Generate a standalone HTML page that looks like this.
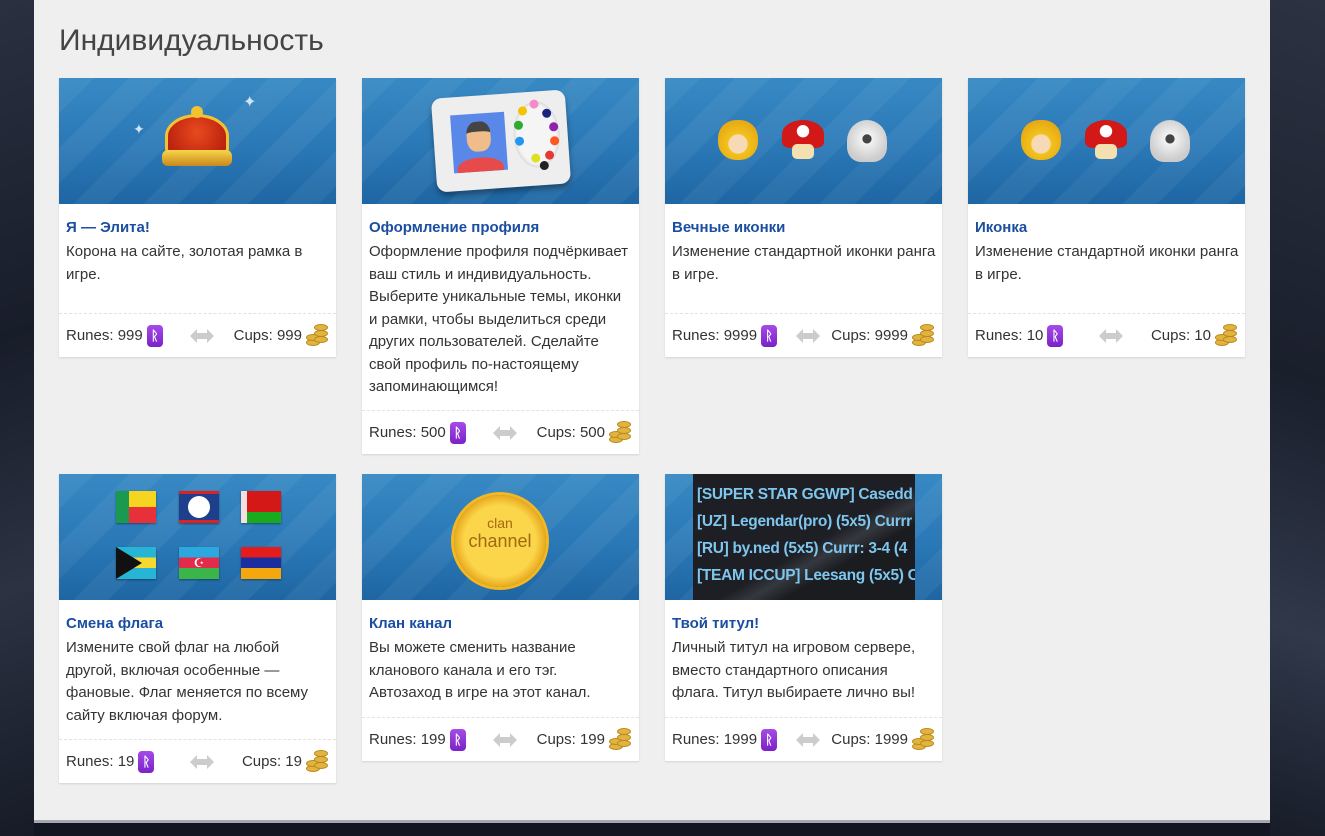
<!DOCTYPE html>
<html><head><meta charset="utf-8">
<style>
*{box-sizing:border-box;margin:0;padding:0}
body{width:1325px;height:836px;overflow:hidden;background:#1b2130;font-family:"Liberation Sans",Arial,sans-serif;position:relative}
.bgl{position:absolute;left:0;top:0;width:34px;height:836px;background:linear-gradient(160deg,#2a3040,#181d2a 40%,#2c3242 70%,#161b27)}
.bgr{position:absolute;right:0;top:0;width:55px;height:836px;background:linear-gradient(200deg,#2c3242,#1a1f2c 45%,#30384a 75%,#171c28)}
.main{position:absolute;left:34px;top:0;width:1236px;height:820px;background:#efefef}
.bottom{position:absolute;left:34px;top:820px;width:1236px;height:16px;background:#121620;border-top:3px solid #a5a9ae}
h1{position:absolute;left:59px;top:24px;font-size:30px;font-weight:normal;color:#444}
.card{position:absolute;width:277px;background:#fff;box-shadow:0 1px 2px rgba(0,0,0,.12)}
.img{height:126px;position:relative;overflow:hidden;background:linear-gradient(180deg,#3789c4 0%,#2a78b6 55%,#1e66a3 100%)}
.img:before{content:"";position:absolute;inset:0;background:linear-gradient(135deg,rgba(255,255,255,.05) 25%,transparent 25%,transparent 50%,rgba(255,255,255,.05) 50%,rgba(255,255,255,.05) 75%,transparent 75%);background-size:70px 70px}
.t{font-size:15px;font-weight:bold;color:#1b4ea1;padding:16px 7px 0;line-height:16px}
.d{font-size:15px;color:#333;line-height:22.5px;padding:5px 0 0 7px;white-space:nowrap}
.f{position:absolute;left:0;right:0;bottom:0;height:44px;border-top:1px dashed #e2e2e2;display:flex;align-items:center;justify-content:space-between;padding:0 6px 0 7px;font-size:15px;color:#333}
.f span{display:flex;align-items:center}
.rune{display:inline-block;width:16px;height:22px;border-radius:4px;background:linear-gradient(#a44be8,#7a22c8);margin-left:4px;color:#fff;font-size:13px;font-weight:bold;text-align:center;line-height:22px;font-style:normal}
.arr{width:24px;height:14px;margin-left:8px}
.coin{display:inline-block;width:24px;height:24px;margin-left:4px;position:relative}
.coin i{position:absolute;width:14px;height:7px;border-radius:50%;background:#e2b33f;border:1px solid #b88a1e}
.flag{position:absolute;width:40px;height:32px;box-shadow:0 1px 2px rgba(0,0,0,.4)}
</style></head><body>
<div class="bgl"></div><div class="bgr"></div>
<div class="main"></div>
<div class="bottom"></div>
<h1>Индивидуальность</h1>

<svg width="0" height="0" style="position:absolute"><defs><symbol id="ar" viewBox="0 0 24 14"><path d="M0 7 L7 0 V4 H17 V0 L24 7 L17 14 V10 H7 V14 Z" fill="#ccc"/></symbol></defs></svg>

<div class="card" style="left:59px;top:78px;height:279px">
 <div class="img">
  <div style="position:absolute;left:103px;top:28px;width:70px;height:66px">
   <div style="position:absolute;left:3px;top:8px;width:64px;height:44px;border-radius:50% 50% 10px 10px;background:radial-gradient(circle at 50% 40%,#e84a1f,#b31a0a);border:3px solid #f1c232"></div>
   <div style="position:absolute;left:0;top:44px;width:70px;height:16px;border-radius:6px;background:linear-gradient(#f7d64a,#c9881a)"></div>
   <div style="position:absolute;left:29px;top:0;width:12px;height:12px;border-radius:50%;background:#f1c232"></div>
  </div>
  <div style="position:absolute;left:74px;top:43px;color:#cfe4f5;font-size:14px">✦</div>
  <div style="position:absolute;left:184px;top:14px;color:#cfe4f5;font-size:16px">✦</div>
 </div>
 <div class="t">Я — Элита!</div>
 <div class="d">Корона на сайте, золотая рамка в<br>игре.</div>
 <div class="f"><span>Runes: 999<i class="rune">ᚱ</i></span><svg class="arr"><use href="#ar"/></svg><span>Cups: 999<i class="coin"><i style="left:0;top:15px"></i><i style="left:0;top:10px"></i><i style="left:8px;top:12px"></i><i style="left:8px;top:6px"></i><i style="left:8px;top:0"></i></i></span></div>
</div>

<div class="card" style="left:362px;top:78px;height:376px">
 <div class="img">
  <div style="position:absolute;left:72px;top:16px;width:134px;height:94px;background:#eee;border-radius:10px;transform:rotate(-4deg);box-shadow:0 4px 6px rgba(0,0,0,.35)">
   <div style="position:absolute;left:18px;top:18px;width:54px;height:58px;background:#5a88e8;overflow:hidden">
    <div style="position:absolute;left:15px;top:8px;width:24px;height:30px;border-radius:40%;background:#f0bd8a;border-top:10px solid #444"></div>
    <div style="position:absolute;left:4px;top:44px;width:46px;height:20px;border-radius:50% 50% 0 0;background:#e64a4a"></div>
   </div>
   <div style="position:absolute;left:80px;top:10px;width:46px;height:66px;border-radius:50%;background:#f5f5f5;box-shadow:inset 0 0 4px #bbb"></div>
   <div style="position:absolute;left:98px;top:8px;width:9px;height:9px;border-radius:50%;background:#f58cc8"></div>
   <div style="position:absolute;left:86px;top:14px;width:9px;height:9px;border-radius:50%;background:#f5c400"></div>
   <div style="position:absolute;left:110px;top:18px;width:9px;height:9px;border-radius:50%;background:#1a237e"></div>
   <div style="position:absolute;left:81px;top:28px;width:9px;height:9px;border-radius:50%;background:#2eaa2e"></div>
   <div style="position:absolute;left:116px;top:32px;width:9px;height:9px;border-radius:50%;background:#8e24aa"></div>
   <div style="position:absolute;left:81px;top:44px;width:9px;height:9px;border-radius:50%;background:#2196f3"></div>
   <div style="position:absolute;left:116px;top:46px;width:9px;height:9px;border-radius:50%;background:#ff5722"></div>
   <div style="position:absolute;left:110px;top:60px;width:9px;height:9px;border-radius:50%;background:#e53935"></div>
   <div style="position:absolute;left:96px;top:62px;width:9px;height:9px;border-radius:50%;background:#e0e020"></div>
   <div style="position:absolute;left:104px;top:70px;width:9px;height:9px;border-radius:50%;background:#222"></div>
  </div>
 </div>
 <div class="t">Оформление профиля</div>
 <div class="d">Оформление профиля подчёркивает<br>ваш стиль и индивидуальность.<br>Выберите уникальные темы, иконки<br>и рамки, чтобы выделиться среди<br>других пользователей. Сделайте<br>свой профиль по-настоящему<br>запоминающимся!</div>
 <div class="f"><span>Runes: 500<i class="rune">ᚱ</i></span><svg class="arr"><use href="#ar"/></svg><span>Cups: 500<i class="coin"><i style="left:0;top:15px"></i><i style="left:0;top:10px"></i><i style="left:8px;top:12px"></i><i style="left:8px;top:6px"></i><i style="left:8px;top:0"></i></i></span></div>
</div>

<div class="card" style="left:665px;top:78px;height:279px">
 <div class="img">
  <div style="position:absolute;left:53px;top:42px;width:40px;height:40px;border-radius:45%;background:radial-gradient(circle at 50% 60%,#f6d9b5 30%,#f2c21c 32%,#e09a10)"></div>
  <div style="position:absolute;left:117px;top:42px;width:42px;height:28px;border-radius:50% 50% 20% 20%;background:radial-gradient(circle at 50% 40%,#fff 22%,#d31818 24%)"></div>
  <div style="position:absolute;left:127px;top:66px;width:22px;height:15px;border-radius:5px;background:#f4e0b0"></div>
  <div style="position:absolute;left:182px;top:42px;width:40px;height:42px;border-radius:50% 50% 35% 35%;background:radial-gradient(circle at 50% 45%,#444 14%,#f2f2f2 16%,#ccc 70%)"></div>
 </div>
 <div class="t">Вечные иконки</div>
 <div class="d">Изменение стандартной иконки ранга<br>в игре.</div>
 <div class="f"><span>Runes: 9999<i class="rune">ᚱ</i></span><svg class="arr"><use href="#ar"/></svg><span>Cups: 9999<i class="coin"><i style="left:0;top:15px"></i><i style="left:0;top:10px"></i><i style="left:8px;top:12px"></i><i style="left:8px;top:6px"></i><i style="left:8px;top:0"></i></i></span></div>
</div>

<div class="card" style="left:968px;top:78px;height:279px">
 <div class="img">
  <div style="position:absolute;left:53px;top:42px;width:40px;height:40px;border-radius:45%;background:radial-gradient(circle at 50% 60%,#f6d9b5 30%,#f2c21c 32%,#e09a10)"></div>
  <div style="position:absolute;left:117px;top:42px;width:42px;height:28px;border-radius:50% 50% 20% 20%;background:radial-gradient(circle at 50% 40%,#fff 22%,#d31818 24%)"></div>
  <div style="position:absolute;left:127px;top:66px;width:22px;height:15px;border-radius:5px;background:#f4e0b0"></div>
  <div style="position:absolute;left:182px;top:42px;width:40px;height:42px;border-radius:50% 50% 35% 35%;background:radial-gradient(circle at 50% 45%,#444 14%,#f2f2f2 16%,#ccc 70%)"></div>
 </div>
 <div class="t">Иконка</div>
 <div class="d">Изменение стандартной иконки ранга<br>в игре.</div>
 <div class="f"><span>Runes: 10<i class="rune">ᚱ</i></span><svg class="arr"><use href="#ar"/></svg><span>Cups: 10<i class="coin"><i style="left:0;top:15px"></i><i style="left:0;top:10px"></i><i style="left:8px;top:12px"></i><i style="left:8px;top:6px"></i><i style="left:8px;top:0"></i></i></span></div>
</div>

<div class="card" style="left:59px;top:474px;height:309px">
 <div class="img">
  <div class="flag" style="left:57px;top:17px;background:linear-gradient(90deg,#1a9a50 33%,transparent 33%),linear-gradient(#f5d520 50%,#e8303a 50%)"></div>
  <div class="flag" style="left:120px;top:17px;background:#1d3f8c;border-top:3px solid #d22;border-bottom:3px solid #d22"><div style="margin:2px auto;width:22px;height:22px;border-radius:50%;background:#fff"></div></div>
  <div class="flag" style="left:182px;top:17px;background:linear-gradient(90deg,#f5e0e0 6px,transparent 6px),linear-gradient(#d41818 66%,#1aaa20 66%)"></div>
  <div class="flag" style="left:57px;top:73px;background:linear-gradient(#27b5d5 33%,#f5d830 33%,#f5d830 66%,#27b5d5 66%)"><div style="width:0;height:0;border-top:16px solid transparent;border-bottom:16px solid transparent;border-left:26px solid #111"></div></div>
  <div class="flag" style="left:120px;top:73px;background:linear-gradient(#2aa8df 33%,#e32a4a 33%,#e32a4a 66%,#3ab54a 66%)"><div style="color:#fff;text-align:center;font-size:12px;line-height:32px">☪</div></div>
  <div class="flag" style="left:182px;top:73px;background:linear-gradient(#e41c1c 33%,#1a2ea0 33%,#1a2ea0 66%,#f5a80e 66%)"></div>
 </div>
 <div class="t">Смена флага</div>
 <div class="d">Измените свой флаг на любой<br>другой, включая особенные —<br>фановые. Флаг меняется по всему<br>сайту включая форум.</div>
 <div class="f"><span>Runes: 19<i class="rune">ᚱ</i></span><svg class="arr"><use href="#ar"/></svg><span>Cups: 19<i class="coin"><i style="left:0;top:15px"></i><i style="left:0;top:10px"></i><i style="left:8px;top:12px"></i><i style="left:8px;top:6px"></i><i style="left:8px;top:0"></i></i></span></div>
</div>

<div class="card" style="left:362px;top:474px;height:287px">
 <div class="img">
  <div style="position:absolute;left:92px;top:21px;width:92px;height:92px;border-radius:50%;background:radial-gradient(circle,#fbd54a 55%,#e39d12 75%,#f7c83a 80%);box-shadow:0 0 0 3px #f5b820"></div>
  <div style="position:absolute;left:92px;top:42px;width:92px;text-align:center;color:#a26a10;font-size:14px;line-height:14px">clan<br><span style="font-size:18px;line-height:22px">channel</span></div>
 </div>
 <div class="t">Клан канал</div>
 <div class="d">Вы можете сменить название<br>кланового канала и его тэг.<br>Автозаход в игре на этот канал.</div>
 <div class="f"><span>Runes: 199<i class="rune">ᚱ</i></span><svg class="arr"><use href="#ar"/></svg><span>Cups: 199<i class="coin"><i style="left:0;top:15px"></i><i style="left:0;top:10px"></i><i style="left:8px;top:12px"></i><i style="left:8px;top:6px"></i><i style="left:8px;top:0"></i></i></span></div>
</div>

<div class="card" style="left:665px;top:474px;height:287px">
 <div class="img">
  <div style="position:absolute;left:28px;top:0;width:222px;height:126px;background:linear-gradient(150deg,#1d1f24 55%,#35383e 62%,#1a1c20 70%);overflow:hidden;white-space:nowrap;font-size:15.5px;font-weight:bold;color:#7ec6ee;line-height:27px;padding:7px 0 0 4px;letter-spacing:-0.3px">[SUPER STAR GGWP] Casedd (<br>[UZ] Legendar(pro) (5x5) Currr<br>[RU] by.ned (5x5) Currr: 3-4 (4<br>[TEAM ICCUP] Leesang (5x5) C</div>
 </div>
 <div class="t">Твой титул!</div>
 <div class="d">Личный титул на игровом сервере,<br>вместо стандартного описания<br>флага. Титул выбираете лично вы!</div>
 <div class="f"><span>Runes: 1999<i class="rune">ᚱ</i></span><svg class="arr"><use href="#ar"/></svg><span>Cups: 1999<i class="coin"><i style="left:0;top:15px"></i><i style="left:0;top:10px"></i><i style="left:8px;top:12px"></i><i style="left:8px;top:6px"></i><i style="left:8px;top:0"></i></i></span></div>
</div>
</body></html>
